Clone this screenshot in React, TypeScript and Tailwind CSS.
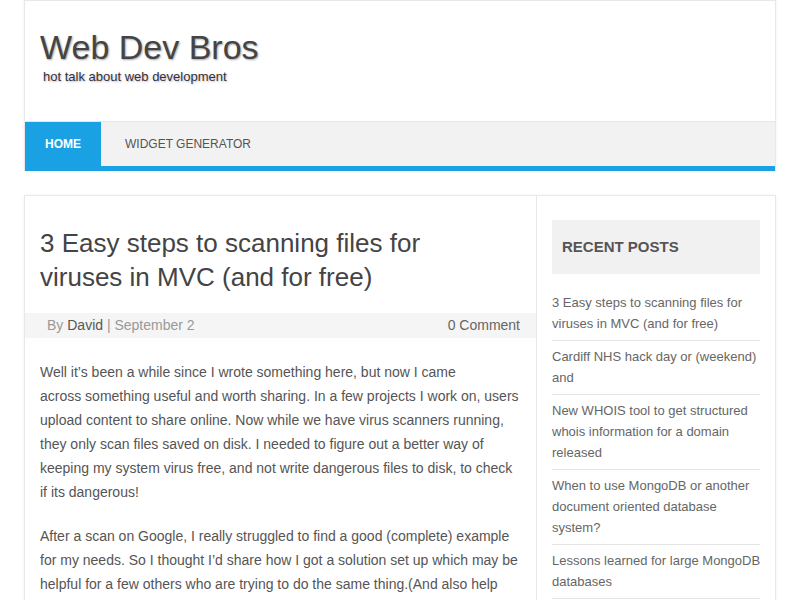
const RECENT_POSTS = [
  '3 Easy steps to scanning files for viruses in MVC (and for free)',
  'Cardiff NHS hack day or (weekend) and',
  'New WHOIS tool to get structured whois information for a domain released',
  'When to use MongoDB or another document oriented database system?',
  'Lessons learned for large MongoDB databases',
  'Getting started with Node.js on Windows',
];

export default function App() {
  return (
    <div className="min-h-screen bg-white font-['Liberation_Sans',Arial,sans-serif]">
      <div className="mx-auto w-[752px]">
        {/* Header */}
        <header className="border-x border-t border-[#e8e8e8] bg-white shadow-[0_0_3px_rgba(0,0,0,0.05)]">
          <div className="h-[120px] px-[15px] pt-[26px]">
            <h1 className="text-[34px] leading-[40px] text-[#444] [text-shadow:1px_1px_2px_rgba(0,0,0,0.35)]">
              Web Dev Bros
            </h1>
            <p className="mt-[2px] pl-[3px] text-[13px] leading-4 text-[#333] [text-shadow:1px_1px_2px_rgba(60,0,90,0.3)]">
              hot talk about web development
            </p>
          </div>

          {/* Nav */}
          <nav className="border-t border-[#e6e6e6] bg-[#f2f2f2]">
            <ul className="flex h-[44px] items-stretch">
              <li className="flex w-[76px] items-center justify-center bg-[#1aa1e3] text-[12px] font-bold text-white">
                HOME
              </li>
              <li className="flex items-center pl-6 text-[12px] text-[#555]">WIDGET GENERATOR</li>
            </ul>
            <div className="h-[5px] bg-[#1aa1e3]" />
          </nav>
        </header>

        {/* Content */}
        <div className="mt-6 flex border border-[#e8e8e8] shadow-[0_0_3px_rgba(0,0,0,0.05)]">
          <main className="w-[512px] border-r border-[#e8e8e8] pt-[30px]">
            <h2 className="pl-[15px] pr-[60px] text-[26px] leading-[34px] text-[#444]">
              3 Easy steps to scanning files for viruses in MVC (and for free)
            </h2>

            <div className="mt-[19px] flex h-[25px] items-center justify-between bg-[#f5f5f5] pl-[22px] pr-[16px] text-[14px] leading-[25px]">
              <span className="text-[#999]">
                By <span className="text-[#555]">David</span> | September 2
              </span>
              <span className="text-[#666]">0 Comment</span>
            </div>

            <div className="mt-[22px] px-[15px] text-[14px] leading-6 text-[#555]">
              <p className="mb-5">
                Well it’s been a while since I wrote something here, but now I came
                <br />
                across something useful and worth sharing. In a few projects I work on, users upload content to
                share online. Now while we have virus scanners running, they only scan files saved on disk. I needed
                to figure out a better way of keeping my system virus free, and not write dangerous files to disk, to
                check if its dangerous!
              </p>
              <p className="mb-5">
                After a scan on Google, I really struggled to find a good (complete) example for my needs. So I
                thought I’d share how I got a solution set up which may be helpful for a few others who are trying to
                do the same thing.(And also help myself remember how it was done next time!)
              </p>
            </div>
          </main>

          {/* Sidebar */}
          <aside className="flex-1 px-[15px] pt-6">
            <div className="flex h-[54px] items-center bg-[#f1f1f1] px-[10px]">
              <h3 className="text-[15px] font-bold text-[#555]">RECENT POSTS</h3>
            </div>
            <ul className="mt-[13px]">
              {RECENT_POSTS.map((post) => (
                <li
                  key={post}
                  className="border-b border-[#e5e5e5] pb-[6px] pt-[5px] text-[13px] leading-[21px] text-[#666]"
                >
                  <span className="-mr-1 block">{post}</span>
                </li>
              ))}
            </ul>
          </aside>
        </div>
      </div>
    </div>
  );
}
